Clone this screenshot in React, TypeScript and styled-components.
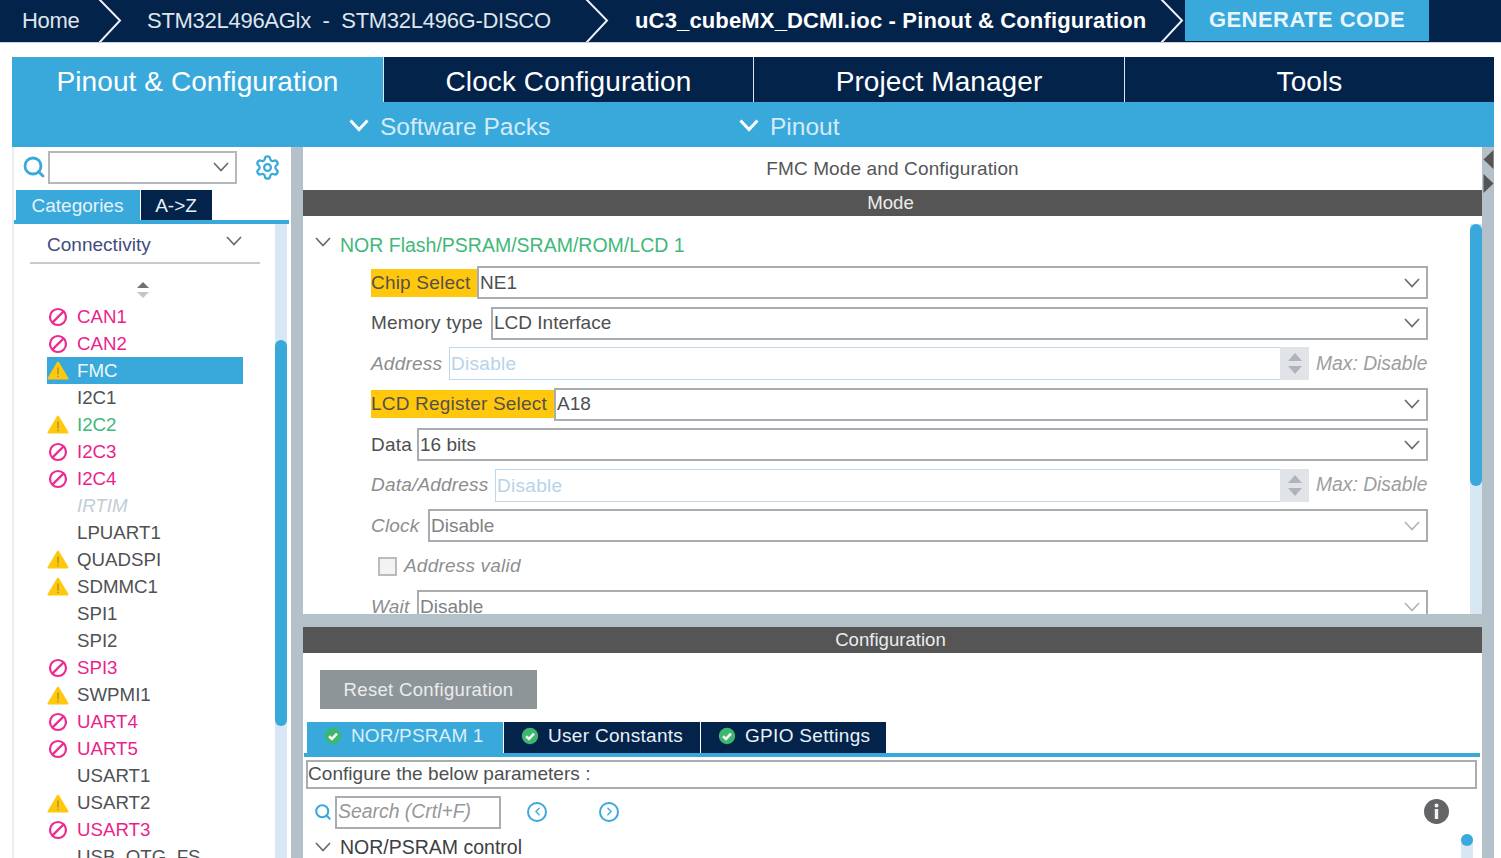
import React from 'react';
import styled, { createGlobalStyle } from 'styled-components';
import { ChevronLeft, ChevronRight, Search, Settings } from 'lucide-react';

const Global = createGlobalStyle`
  html, body { margin: 0; padding: 0; background: #fff; overflow: hidden; }
  body { font-family: "Liberation Sans", Arial, sans-serif; }
  * { box-sizing: border-box; }
`;

const NAVY = '#03234b';
const BLUE = '#39a9dc';
const GRAY = '#b5c1c9';
const DARK = '#545554';

const Page = styled.div`
  width: 1501px; height: 858px; overflow: hidden; display: flex; flex-direction: column;
`;
const TopBar = styled.div`
  height: 43px; flex: none; background: ${NAVY}; border-bottom: 1px solid #c4d0de;
  display: flex; align-items: flex-start; color: #fff;
`;
const Crumb = styled.div<{ $w: number; $pl: number; $bold?: boolean }>`
  width: ${p => p.$w}px; padding-left: ${p => p.$pl}px; height: 42px; line-height: 41px; flex: none;
  font-size: 22px; white-space: pre; color: ${p => (p.$bold ? '#fff' : '#dfe5ec')};
  font-weight: ${p => (p.$bold ? 700 : 400)};
  letter-spacing: ${p => (p.$bold ? '0.15px' : '-0.28px')};
`;
const CrumbArrow = styled.svg`
  width: 25px; height: 42px; flex: none; display: block;
`;
const Generate = styled.div`
  width: 244px; height: 41px; line-height: 40px; background: ${BLUE}; text-align: center; flex: none;
  font-size: 22px; font-weight: 700; color: #eaf6fc; letter-spacing: 0.45px;
`;
const Shell = styled.div`
  margin: 14px 7px 0 12px; flex: 1; min-height: 0; display: flex; flex-direction: column;
`;
const Tabs = styled.div`
  height: 45px; flex: none; display: grid; grid-template-columns: 371px 370px 371px 370px;
`;
const Tab = styled.div<{ $active?: boolean }>`
  background: ${p => (p.$active ? BLUE : NAVY)};
  border-left: ${p => (p.$active ? 'none' : '1px solid #dfe6ee')};
  color: #fff; text-align: center; font-size: 28px; line-height: 49px; letter-spacing: 0.08px;
`;
const SubBar = styled.div`
  height: 45px; flex: none; background: ${BLUE}; display: flex; align-items: center;
  color: #d5ebf7; font-size: 24.5px; padding: 5px 0 0 337px;
`;
const SubItem = styled.div<{ $w: number }>`
  width: ${p => p.$w}px; display: flex; align-items: center; gap: 11px; flex: none;
`;
const SubChevron = styled.svg`
  width: 20px; height: 13px; flex: none; display: block; margin-top: -3px;
`;
const Body = styled.div`
  flex: 1; min-height: 0; display: flex;
`;
const Side = styled.div`
  width: 279px; flex: none; display: flex; flex-direction: column; border-left: 2px solid #e9eff5;
`;
const SideSearch = styled.div`
  height: 43px; flex: none; display: flex; align-items: center; padding: 0 0 3px 8px;
`;
const BlueIcon = styled.span`
  color: ${BLUE}; display: flex; flex: none;
`;
const Combo = styled.div`
  width: 189px; height: 33px; border: 2px solid #b4b8bb; margin: 0 17px 0 2px; display: flex; align-items: center; justify-content: flex-end;
  padding-right: 6px;
`;
const SideTabs = styled.div`
  height: 30px; flex: none; padding-left: 2px; display: flex; gap: 1px;
`;
const SideTab = styled.div<{ $w: number; $active?: boolean }>`
  width: ${p => p.$w}px; background: ${p => (p.$active ? BLUE : NAVY)}; color: #e6f2f9; text-align: center;
  font-size: 19px; line-height: 31px; padding-right: 1px;
`;
const BlueLine = styled.div`
  height: 4px; flex: none; background: ${BLUE}; margin-right: 2px;
`;
const SideBody = styled.div`
  flex: 1; min-height: 0; display: flex;
`;
const SideList = styled.div`
  flex: 1; min-width: 0; display: flex; flex-direction: column;
`;
const CatRow = styled.div`
  margin: 0 15px 0 16px; height: 40px; flex: none; border-bottom: 2px solid #c3cad0; display: flex; align-items: center;
  justify-content: space-between; padding: 3px 18px 0 17px; color: #3f4c7e; font-size: 19px; letter-spacing: 0.02px;
`;
const CatChevron = styled.span`
  display: flex; margin-top: -7px;
`;
const Sort = styled.svg`
  display: block; margin: 17px 0 0 122px; width: 14px; height: 18px; flex: none;
`;
const Items = styled.div`
  margin: 4px 0 0 33px; width: 196px; display: flex; flex-direction: column;
`;
const Item = styled.div<{ $color: string; $sel?: boolean; $it?: boolean }>`
  height: 27.05px; flex: none; display: flex; align-items: center; font-size: 18.7px;
  background: ${p => (p.$sel ? BLUE : 'transparent')}; color: ${p => p.$color};
  font-style: ${p => (p.$it ? 'italic' : 'normal')};
`;
const ItemIcon = styled.span`
  width: 30px; flex: none; display: flex; justify-content: center; padding-right: 8px;
`;
const Track = styled.div`
  width: 12px; flex: none; background: #d8e7f4; margin-right: 4px;
`;
const Thumb = styled.div<{ $top: number; $h: number }>`
  margin-top: ${p => p.$top}px; height: ${p => p.$h}px; background: ${BLUE}; border-radius: 6px;
`;
const Divider = styled.div`
  width: 12px; flex: none; background: ${GRAY};
`;
const Main = styled.div`
  width: 1179px; flex: none; display: flex; flex-direction: column;
`;
const ModePanel = styled.div`
  height: 467px; flex: none; display: flex; flex-direction: column; overflow: hidden;
`;
const PanelTitle = styled.div`
  height: 43px; flex: none; text-align: center; font-size: 19px; line-height: 44px; color: #545658; letter-spacing: 0.13px;
`;
const Band = styled.div`
  height: 26px; flex: none; background: ${DARK}; color: #ececec; text-align: center; font-size: 18.6px; line-height: 26px; padding-right: 4px;
`;
const ModeBody = styled.div`
  flex: 1; min-height: 0; display: flex; overflow: hidden;
`;
const ModeForm = styled.div`
  flex: 1; min-width: 0; display: flex; flex-direction: column; overflow: hidden;
`;
const SecHead = styled.div`
  height: 36px; margin-top: 11px; flex: none; display: flex; align-items: center; gap: 9px; padding-left: 12px; font-size: 19.5px; color: #3fb87a;
`;
const HeadChevron = styled.span`
  display: flex; margin-top: -7px;
`;
const Rows = styled.div`
  margin: 3px 42px 0 68px; display: flex; flex-direction: column; gap: 7.5px;
`;
const Row = styled.div`
  height: 33px; flex: none; display: flex; align-items: center; font-size: 19px; color: #4d4f52;
`;
const Lbl = styled.span<{ $w: number; $mark?: boolean; $off?: boolean }>`
  width: ${p => p.$w}px; flex: none; white-space: pre; height: 28px; line-height: 28px; letter-spacing: 0.2px;
  background: ${p => (p.$mark ? '#ffc80c' : 'transparent')};
  color: ${p => (p.$off ? '#8b8d8f' : p.$mark ? '#55504a' : '#4d4f52')};
  font-style: ${p => (p.$off ? 'italic' : 'normal')};
`;
const Field = styled.div<{ $off?: boolean }>`
  flex: 1; min-width: 0; height: 33px; border: 2px solid #a9adb1; display: flex; align-items: center; justify-content: space-between;
  padding: 0 6px 0 1px; color: ${p => (p.$off ? '#808285' : '#4d4f52')};
`;
const SpinInput = styled.div`
  flex: 1; min-width: 0; height: 33px; border: 1px solid #bcd8ef; border-right: none; padding: 0 1px; line-height: 31px; color: #b6d3ea; letter-spacing: 0.3px;
`;
const Spin = styled.div`
  width: 29px; height: 33px; background: #e0e4e8; flex: none; display: flex; flex-direction: column; align-items: center; justify-content: center; gap: 5px;
  margin-right: 7px;
`;
const Tri = styled.span<{ $down?: boolean }>`
  width: 0; height: 0; border-left: 7px solid transparent; border-right: 7px solid transparent;
  ${p => (p.$down ? 'border-top: 8px solid #b0b4b8;' : 'border-bottom: 8px solid #b0b4b8;')}
`;
const Max = styled.span`
  flex: none; font-style: italic; color: #9c9ea0; width: 112px; font-size: 19.3px; white-space: pre;
`;
const CheckRow = styled.div`
  height: 33px; flex: none; display: flex; align-items: center; padding-left: 7px; gap: 7px; font-size: 19px; font-style: italic; color: #8d8f91; letter-spacing: 0.2px;
`;
const Box = styled.span`
  width: 19px; height: 19px; border: 2px solid #b8bcbf; background: #f3f3f3; flex: none;
`;
const ModeTrack = styled.div`
  width: 12px; flex: none; background: #d8e7f4; margin-top: 8px;
`;
const Strip = styled.div`
  width: 12px; flex: none; background: ${GRAY}; display: flex; flex-direction: column; align-items: flex-end; padding-top: 2px; gap: 3px;
`;
const StripArrow = styled.svg`
  width: 11px; height: 21px; flex: none; display: block;
`;
const Gap = styled.div`
  height: 13px; flex: none; background: ${GRAY};
`;
const ConfigPanel = styled.div`
  flex: 1; min-height: 0; display: flex; flex-direction: column; overflow: hidden;
`;
const ResetBtn = styled.div`
  width: 217px; height: 39px; background: #8e9599; margin: 17px 0 0 17px; flex: none; color: #ececec; text-align: center;
  line-height: 39px; font-size: 18.5px; letter-spacing: 0.33px;
`;
const CfgTabs = styled.div`
  height: 31px; margin: 13px 0 0 4px; flex: none; display: flex; gap: 1px;
`;
const CfgTab = styled.div<{ $w: number; $active?: boolean }>`
  width: ${p => p.$w}px; background: ${p => (p.$active ? BLUE : NAVY)}; color: ${p => (p.$active ? '#d9eef8' : '#e9f1f6')}; font-size: 19px;
  display: flex; align-items: center; gap: 9px; padding: 0 0 3px 17px; letter-spacing: ${p => (p.$active ? '0.15px' : '0.3px')}; flex: none;
`;
const CheckIcon = styled.svg`
  width: 18px; height: 18px; flex: none; display: block;
`;
const CfgLine = styled.div`
  height: 4px; margin: 0 2px 0 1px; flex: none; background: ${BLUE};
`;
const ConfBox = styled.div`
  height: 29px; margin: 3px 5px 0 3px; border: 2px solid #a9adb1; flex: none; line-height: 24px; font-size: 19px; color: #4d4f52; letter-spacing: 0.05px;
`;
const CfgSearch = styled.div`
  height: 33px; margin-top: 7px; flex: none; display: flex; align-items: center; padding: 0 0 2px 11px;
`;
const SearchInput = styled.div`
  width: 166px; height: 33px; border: 2px solid #a9adb1; margin: 2px 0 0 3px; font-size: 19.4px; font-style: italic; color: #96989a; line-height: 27px; padding-left: 1px; flex: none;
`;
const Nav = styled.span<{ $ml: number }>`
  margin-left: ${p => p.$ml}px; color: ${BLUE}; display: flex; flex: none;
  width: 20px; height: 20px; border: 2px solid ${BLUE}; border-radius: 50%; align-items: center; justify-content: center;
`;
const Info = styled.svg`
  margin-left: auto; margin-right: 33px; width: 25px; height: 25px; flex: none; display: block;
`;
const CfgBottom = styled.div`
  display: flex; align-items: flex-start; flex: none; margin-top: 2px; height: 40px;
`;
const CtrlHead = styled.div`
  display: flex; align-items: center; gap: 9px; font-size: 19.5px; color: #3d4043; padding: 0 0 2px 12px; flex: 1; height: 34px;
`;
const MiniTrack = styled.div`
  width: 12px; height: 40px; margin: 3px 9px 0 0; background: #d8e7f4; border-radius: 6px 6px 0 0; flex: none;
`;
const MiniThumb = styled.div`
  height: 12px; border-radius: 50%; background: ${BLUE};
`;

const Chev = ({ light }: { light?: boolean }) => (
  <svg width="16" height="10" viewBox="0 0 16 10" fill="none" stroke={light ? '#b2b4b6' : '#686c70'} strokeWidth="1.7" style={{ flex: 'none', display: 'block' }}>
    <path d="M1 1 L8 8.5 L15 1" />
  </svg>
);
const Warn = () => (
  <svg width="22" height="19" viewBox="0 0 22 19">
    <path d="M11 1.5 L20.5 17.5 H1.5 Z" fill="#ffc80c" stroke="#ffc80c" strokeWidth="2" strokeLinejoin="round" />
    <rect x="10.3" y="6.5" width="1.4" height="7" fill="#a98f3c" />
    <rect x="10.3" y="14.7" width="1.4" height="1.6" fill="#a98f3c" />
  </svg>
);
const Ban = () => (
  <svg width="20" height="20" viewBox="0 0 20 20" fill="none" stroke="#ec2a8f" strokeWidth="2.2">
    <circle cx="10" cy="10" r="8" />
    <path d="M4.6 15.4 L15.4 4.6" />
  </svg>
);
const OkIcon = () => (
  <CheckIcon viewBox="0 0 18 18">
    <circle cx="9" cy="9" r="8.2" fill="#3db66f" />
    <path d="M5 9.2 L8 12 L13 6.6" fill="none" stroke="#f4f8f4" strokeWidth="2.6" />
  </CheckIcon>
);
const SubArrow = () => (
  <SubChevron viewBox="0 0 20 13">
    <path d="M1.5 1.5 L10 10.5 L18.5 1.5" fill="none" stroke="#fff" strokeWidth="3" />
  </SubChevron>
);

type It = { n: string; c: string; i?: 'w' | 'b'; sel?: boolean; it?: boolean };
const PINK = '#ea1f8c';
const TXT = '#4f5154';
const items: It[] = [
  { n: 'CAN1', c: PINK, i: 'b' },
  { n: 'CAN2', c: PINK, i: 'b' },
  { n: 'FMC', c: '#f0f8fc', i: 'w', sel: true },
  { n: 'I2C1', c: TXT },
  { n: 'I2C2', c: '#3fb87a', i: 'w' },
  { n: 'I2C3', c: PINK, i: 'b' },
  { n: 'I2C4', c: PINK, i: 'b' },
  { n: 'IRTIM', c: '#c2cdd5', it: true },
  { n: 'LPUART1', c: TXT },
  { n: 'QUADSPI', c: TXT, i: 'w' },
  { n: 'SDMMC1', c: TXT, i: 'w' },
  { n: 'SPI1', c: TXT },
  { n: 'SPI2', c: TXT },
  { n: 'SPI3', c: PINK, i: 'b' },
  { n: 'SWPMI1', c: TXT, i: 'w' },
  { n: 'UART4', c: PINK, i: 'b' },
  { n: 'UART5', c: PINK, i: 'b' },
  { n: 'USART1', c: TXT },
  { n: 'USART2', c: TXT, i: 'w' },
  { n: 'USART3', c: PINK, i: 'b' },
  { n: 'USB_OTG_FS', c: TXT },
];

const Arrow = () => (
  <CrumbArrow viewBox="0 0 25 42">
    <path d="M1 -1 L22 20.5 L1 43" fill="none" stroke="#eef2f6" strokeWidth="2" />
  </CrumbArrow>
);

const SpinRow = ({ label, value, w }: { label: string; value: string; w: number }) => (
  <Row>
    <Lbl $w={w} $off>{label}</Lbl>
    <SpinInput>{value}</SpinInput>
    <Spin><Tri /><Tri $down /></Spin>
    <Max>Max: Disable</Max>
  </Row>
);
const SelectRow = ({ label, value, w, mark, off }: { label: string; value: string; w: number; mark?: boolean; off?: boolean }) => (
  <Row>
    <Lbl $w={w} $mark={mark} $off={off}>{label}</Lbl>
    <Field $off={off}>{value}<Chev light={off} /></Field>
  </Row>
);

export default function App() {
  return (
    <Page>
      <Global />
      <TopBar>
        <Crumb $w={98} $pl={22}>Home</Crumb>
        <Arrow />
        <Crumb $w={462} $pl={24}>STM32L496AGlx  -  STM32L496G-DISCO</Crumb>
        <Arrow />
        <Crumb $w={550} $pl={25} $bold>uC3_cubeMX_DCMI.ioc - Pinout &amp; Configuration</Crumb>
        <Arrow />
        <Generate>GENERATE CODE</Generate>
      </TopBar>
      <Shell>
        <Tabs>
          <Tab $active>Pinout &amp; Configuration</Tab>
          <Tab>Clock Configuration</Tab>
          <Tab>Project Manager</Tab>
          <Tab>Tools</Tab>
        </Tabs>
        <SubBar>
          <SubItem $w={390}><SubArrow />Software Packs</SubItem>
          <SubItem $w={200}><SubArrow />Pinout</SubItem>
        </SubBar>
        <Body>
          <Side>
            <SideSearch>
              <BlueIcon><Search size={24} strokeWidth={2.8} /></BlueIcon>
              <Combo><Chev /></Combo>
              <BlueIcon><Settings size={27} strokeWidth={2} /></BlueIcon>
            </SideSearch>
            <SideTabs>
              <SideTab $w={124} $active>Categories</SideTab>
              <SideTab $w={71}>A-&gt;Z</SideTab>
            </SideTabs>
            <BlueLine />
            <SideBody>
              <SideList>
                <CatRow>Connectivity<CatChevron><Chev /></CatChevron></CatRow>
                <Sort viewBox="0 0 14 18">
                  <path d="M7 1 L13 7 H1 Z" fill="#6f7275" />
                  <path d="M7 17 L13 11 H1 Z" fill="#c3c7ca" />
                </Sort>
                <Items>
                  {items.map(x => (
                    <Item key={x.n} $color={x.c} $sel={x.sel} $it={x.it}>
                      <ItemIcon>{x.i === 'w' ? <Warn /> : x.i === 'b' ? <Ban /> : null}</ItemIcon>
                      {x.n}
                    </Item>
                  ))}
                </Items>
              </SideList>
              <Track><Thumb $top={116} $h={386} /></Track>
            </SideBody>
          </Side>
          <Divider />
          <Main>
            <ModePanel>
              <PanelTitle>FMC Mode and Configuration</PanelTitle>
              <Band>Mode</Band>
              <ModeBody>
                <ModeForm>
                  <SecHead><HeadChevron><Chev /></HeadChevron>NOR Flash/PSRAM/SRAM/ROM/LCD 1</SecHead>
                  <Rows>
                    <SelectRow w={106} label="Chip Select" value="NE1" mark />
                    <SelectRow w={120} label="Memory type" value="LCD Interface" />
                    <SpinRow w={78} label="Address" value="Disable" />
                    <SelectRow w={183} label="LCD Register Select" value="A18" mark />
                    <SelectRow w={46} label="Data" value="16 bits" />
                    <SpinRow w={124} label="Data/Address" value="Disable" />
                    <SelectRow w={57} label="Clock" value="Disable" off />
                    <CheckRow><Box />Address valid</CheckRow>
                    <SelectRow w={46} label="Wait" value="Disable" off />
                  </Rows>
                </ModeForm>
                <ModeTrack><Thumb $top={0} $h={262} /></ModeTrack>
              </ModeBody>
            </ModePanel>
            <Gap />
            <ConfigPanel>
              <Band>Configuration</Band>
              <ResetBtn>Reset Configuration</ResetBtn>
              <CfgTabs>
                <CfgTab $w={196} $active><OkIcon />NOR/PSRAM 1</CfgTab>
                <CfgTab $w={196}><OkIcon />User Constants</CfgTab>
                <CfgTab $w={185}><OkIcon />GPIO Settings</CfgTab>
              </CfgTabs>
              <CfgLine />
              <ConfBox>Configure the below parameters :</ConfBox>
              <CfgSearch>
                <BlueIcon><Search size={18} strokeWidth={2.8} /></BlueIcon>
                <SearchInput>Search (Crtl+F)</SearchInput>
                <Nav $ml={26}><ChevronLeft size={13} strokeWidth={2.4} /></Nav>
                <Nav $ml={52}><ChevronRight size={13} strokeWidth={2.4} /></Nav>
                <Info viewBox="0 0 25 25">
                  <circle cx="12.5" cy="12.5" r="12.5" fill="#626466" />
                  <circle cx="12.5" cy="6.5" r="2" fill="#f2f2f2" />
                  <rect x="10.8" y="10" width="3.4" height="10" fill="#f2f2f2" />
                </Info>
              </CfgSearch>
              <CfgBottom>
                <CtrlHead><Chev />NOR/PSRAM control</CtrlHead>
                <MiniTrack><MiniThumb /></MiniTrack>
              </CfgBottom>
            </ConfigPanel>
          </Main>
          <Strip>
            <StripArrow viewBox="0 0 11 21"><path d="M10.5 1 L0.5 10.5 L10.5 20 Z" fill="#545554" /></StripArrow>
            <StripArrow viewBox="0 0 11 21"><path d="M0.5 1 L10.5 10.5 L0.5 20 Z" fill="#545554" /></StripArrow>
          </Strip>
        </Body>
      </Shell>
    </Page>
  );
}
